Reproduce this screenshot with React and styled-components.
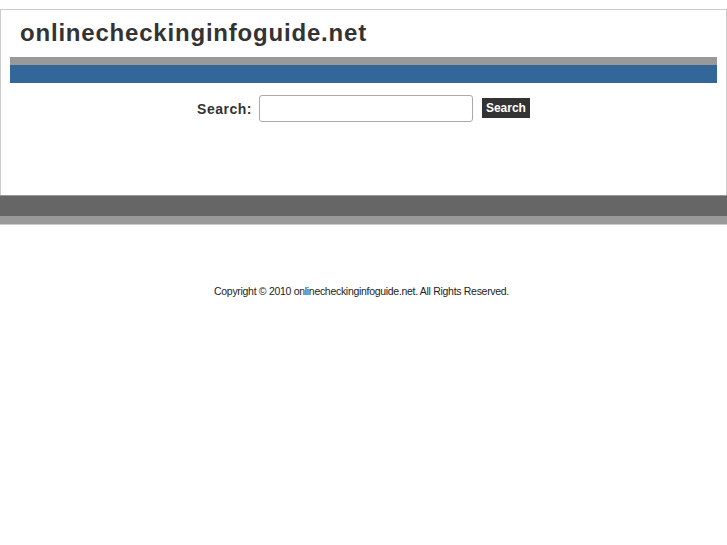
import React from 'react'
import styled, { createGlobalStyle } from 'styled-components'

const GlobalStyle = createGlobalStyle`
  html, body {
    margin: 0;
    padding: 0;
    background: #fff;
    font-family: "Liberation Sans", Arial, sans-serif;
  }
`;

const Wrapper = styled.div`
  padding-top: 9px;
`;

const Box = styled.div`
  border: 1px solid #cccccc;
  border-bottom: none;
  height: 185px;
  display: flex;
  flex-direction: column;
`;

const Title = styled.h1`
  margin: 0;
  padding: 9px 0 0 19px;
  height: 47px;
  box-sizing: border-box;
  font-size: 24px;
  font-weight: bold;
  color: #333;
  line-height: 28px;
  letter-spacing: 0.8px;
`;

const NavBar = styled.div`
  margin: 0 9px;
  height: 18px;
  border-top: 8px solid #999;
  background: #336699;
`;

const SearchForm = styled.form`
  display: flex;
  align-items: center;
  justify-content: center;
  margin-top: 12px;
`;

const Label = styled.label`
  font-size: 14px;
  font-weight: bold;
  color: #333;
  letter-spacing: 0.5px;
  margin-right: 7px;
`;

const Input = styled.input`
  width: 214px;
  height: 27px;
  box-sizing: border-box;
  border: 1px solid #aaa;
  border-radius: 3px;
  margin: 0 9px 0 0;
`;

const Button = styled.button`
  background: #333;
  color: #fff;
  border: none;
  font-family: inherit;
  font-size: 12px;
  font-weight: bold;
  height: 20px;
  padding: 0 4px;
  margin-top: -1px;
`;

const Footer = styled.div`
  height: 20px;
  background: #666;
  border-top: 1px solid #999;
  border-bottom: 8px solid #999;
  box-shadow: 0 1px 0 #ccc;
`;

const Copyright = styled.p`
  margin: 61px 4px 0 0;
  text-align: center;
  font-size: 10.5px;
  color: #222;
  letter-spacing: -0.3px;
`;

export default function App() {
  return (
    <Wrapper>
      <GlobalStyle />
      <Box>
        <Title>onlinecheckinginfoguide.net</Title>
        <NavBar />
        <SearchForm onSubmit={(e) => e.preventDefault()}>
          <Label>Search:</Label>
          <Input type="text" />
          <Button type="submit">Search</Button>
        </SearchForm>
      </Box>
      <Footer />
      <Copyright>Copyright © 2010 onlinecheckinginfoguide.net. All Rights Reserved.</Copyright>
    </Wrapper>
  )
}
